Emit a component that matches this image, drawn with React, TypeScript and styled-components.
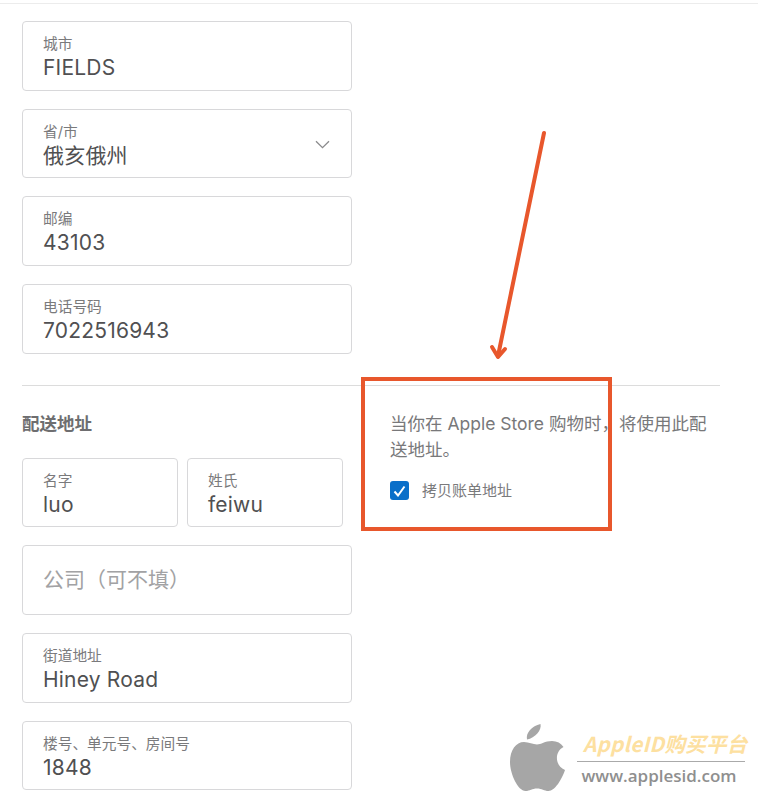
import styled, { createGlobalStyle } from "styled-components";

const FONT = `Inter, "Noto Sans CJK SC", sans-serif`;

const GlobalStyle = createGlobalStyle`
  html, body {
    margin: 0;
    padding: 0;
    background: #fff;
    overflow: hidden;
  }
  body {
    font-family: ${FONT};
    color: #4a4a4c;
  }
`;

const Page = styled.div`
  position: relative;
  width: 758px;
  height: 798px;
  overflow: hidden;
  padding-top: 3px;
  box-sizing: border-box;
`;

const TopRule = styled.div`
  height: 1px;
  background: #ececec;
`;

const Content = styled.div`
  width: 698px;
  margin-left: 22px;
  padding-top: 17px;
`;

const Stack = styled.div`
  display: flex;
  flex-direction: column;
  gap: 18px;
  width: 330px;
`;

const Divider = styled.div`
  height: 1px;
  background: #dcdcdc;
  margin: 31px 0 0;
`;

const Columns = styled.div`
  display: grid;
  grid-template-columns: 330px 330px;
  column-gap: 38px;
`;

const SectionTitle = styled.h2`
  margin: 26px 0 22px;
  font-size: 17.5px;
  line-height: 24px;
  font-weight: 700;
  color: #6e6e70;
`;

const NameRow = styled.div`
  display: grid;
  grid-template-columns: 156px 156px;
  column-gap: 9px;
`;

const FieldBox = styled.div`
  position: relative;
  height: 69.67px;
  box-sizing: border-box;
  border: 1px solid #d8d8da;
  border-radius: 4px;
  padding: 13px 20px 0;
  background: #fff;
`;

const FieldLabel = styled.div`
  font-size: 14.7px;
  line-height: 19px;
  color: #7a7a7c;
`;

const FieldValue = styled.div`
  font-size: 21px;
  line-height: 28px;
  color: #505052;
  letter-spacing: 0.2px;
`;

const Placeholder = styled.div`
  font-size: 21px;
  line-height: 28px;
  padding-top: 7px;
  color: #a2a2a4;
`;

const Chevron = styled.svg`
  position: absolute;
  right: 21px;
  top: 30px;
  width: 15px;
  height: 9px;
`;

const Note = styled.div`
  padding-top: 25px;
`;

const NoteText = styled.p`
  margin: 0;
  font-size: 17.5px;
  line-height: 26px;
  color: #78787a;
`;

const CheckRow = styled.label`
  display: flex;
  align-items: center;
  gap: 13px;
  margin-top: 18px;
  font-size: 15px;
  line-height: 20px;
  color: #7a7a7c;
`;

const CheckBox = styled.span`
  display: flex;
  align-items: center;
  justify-content: center;
  width: 19px;
  height: 19px;
  border-radius: 3px;
  background: #0a6fc9;
`;

const Highlight = styled.div`
  position: absolute;
  left: 361px;
  top: 377px;
  width: 251px;
  height: 154px;
  box-sizing: border-box;
  border: 4px solid #e8572c;
`;

const Arrow = styled.svg`
  position: absolute;
  left: 480px;
  top: 125px;
  width: 75px;
  height: 240px;
`;

const Watermark = styled.div`
  position: absolute;
  left: 510px;
  top: 724px;
  width: 240px;
  height: 72px;
  display: flex;
`;

const AppleMark = styled.svg`
  width: 56px;
  height: 68px;
  flex: none;
`;

const WatermarkText = styled.div`
  margin-left: 11px;
  width: 168px;
  display: flex;
  flex-direction: column;
  align-items: center;
`;

const WatermarkTitle = styled.div`
  font-family: "Noto Sans CJK SC", sans-serif;
  font-size: 20.5px;
  line-height: 26px;
  margin-top: 6px;
  font-weight: 700;
  font-style: italic;
  letter-spacing: 0.3px;
  white-space: nowrap;
  color: #fde0a0;
  border-bottom: 1px solid #aaa;
  padding: 0 0 5px 6px;
  box-sizing: border-box;
  width: 100%;
  text-align: left;
`;

const WatermarkUrl = styled.div`
  font-family: "Open Sans", sans-serif;
  font-size: 17px;
  line-height: 24px;
  margin-top: 2px;
  margin-right: 4px;
  font-weight: 600;
  color: #8f8f8f;
  white-space: nowrap;
`;

type FieldProps = { label: string; value: string; select?: boolean };

const Field = ({ label, value, select }: FieldProps) => (
  <FieldBox>
    <FieldLabel>{label}</FieldLabel>
    <FieldValue>{value}</FieldValue>
    {select && (
      <Chevron viewBox="0 0 15 9" fill="none" stroke="#8a8a8c" strokeWidth="1.3">
        <path d="M1 1.2 L7.5 7.6 L14 1.2" />
      </Chevron>
    )}
  </FieldBox>
);

const App = () => {
  return (
    <Page>
      <GlobalStyle />
      <TopRule />
      <Content>
        <Stack>
          <Field label="城市" value="FIELDS" />
          <Field label="省/市" value="俄亥俄州" select />
          <Field label="邮编" value="43103" />
          <Field label="电话号码" value="7022516943" />
        </Stack>
        <Divider />
        <Columns>
          <div>
            <SectionTitle>配送地址</SectionTitle>
            <Stack>
              <NameRow>
                <Field label="名字" value="luo" />
                <Field label="姓氏" value="feiwu" />
              </NameRow>
              <FieldBox>
                <Placeholder>公司（可不填）</Placeholder>
              </FieldBox>
              <Field label="街道地址" value="Hiney Road" />
              <Field label="楼号、单元号、房间号" value="1848" />
            </Stack>
          </div>
          <Note>
            <NoteText>当你在 Apple Store 购物时，将使用此配送地址。</NoteText>
            <CheckRow>
              <CheckBox>
                <svg width="13" height="12" viewBox="0 0 13 12" fill="none" stroke="#fff" strokeWidth="2">
                  <path d="M1.5 6.5 L5 10.5 L11.5 1.5" />
                </svg>
              </CheckBox>
              拷贝账单地址
            </CheckRow>
          </Note>
        </Columns>
      </Content>

      <Arrow viewBox="0 0 75 240" fill="none" stroke="#e8572c" strokeWidth="4" strokeLinecap="round" strokeLinejoin="round">
        <path d="M64 8 L18 231" />
        <path d="M12 222 L18 232 L25 224" />
      </Arrow>
      <Highlight />

      <Watermark>
        <AppleMark viewBox="0 0 56 68" fill="#a6a6a6">
          <path d="M30.5 0 C32 6 25 14 17 15.5 C15.5 9 22 2 30.5 0 Z" />
          <path d="M14 18 C19 18 23 20.5 27 20.5 C31 20.5 35 17 42 17 C47 17 51 19 53.5 23 C44 28 45 42 55 46 C52 55 45 67 38.5 67 C34 67 32 64.5 27 64.5 C22 64.5 20 67 15.5 67 C8 67 0 50 0 38 C0 26 6 18 14 18 Z" />
        </AppleMark>
        <WatermarkText>
          <WatermarkTitle>AppleID购买平台</WatermarkTitle>
          <WatermarkUrl>www.applesid.com</WatermarkUrl>
        </WatermarkText>
      </Watermark>
    </Page>
  );
};

export default App;
